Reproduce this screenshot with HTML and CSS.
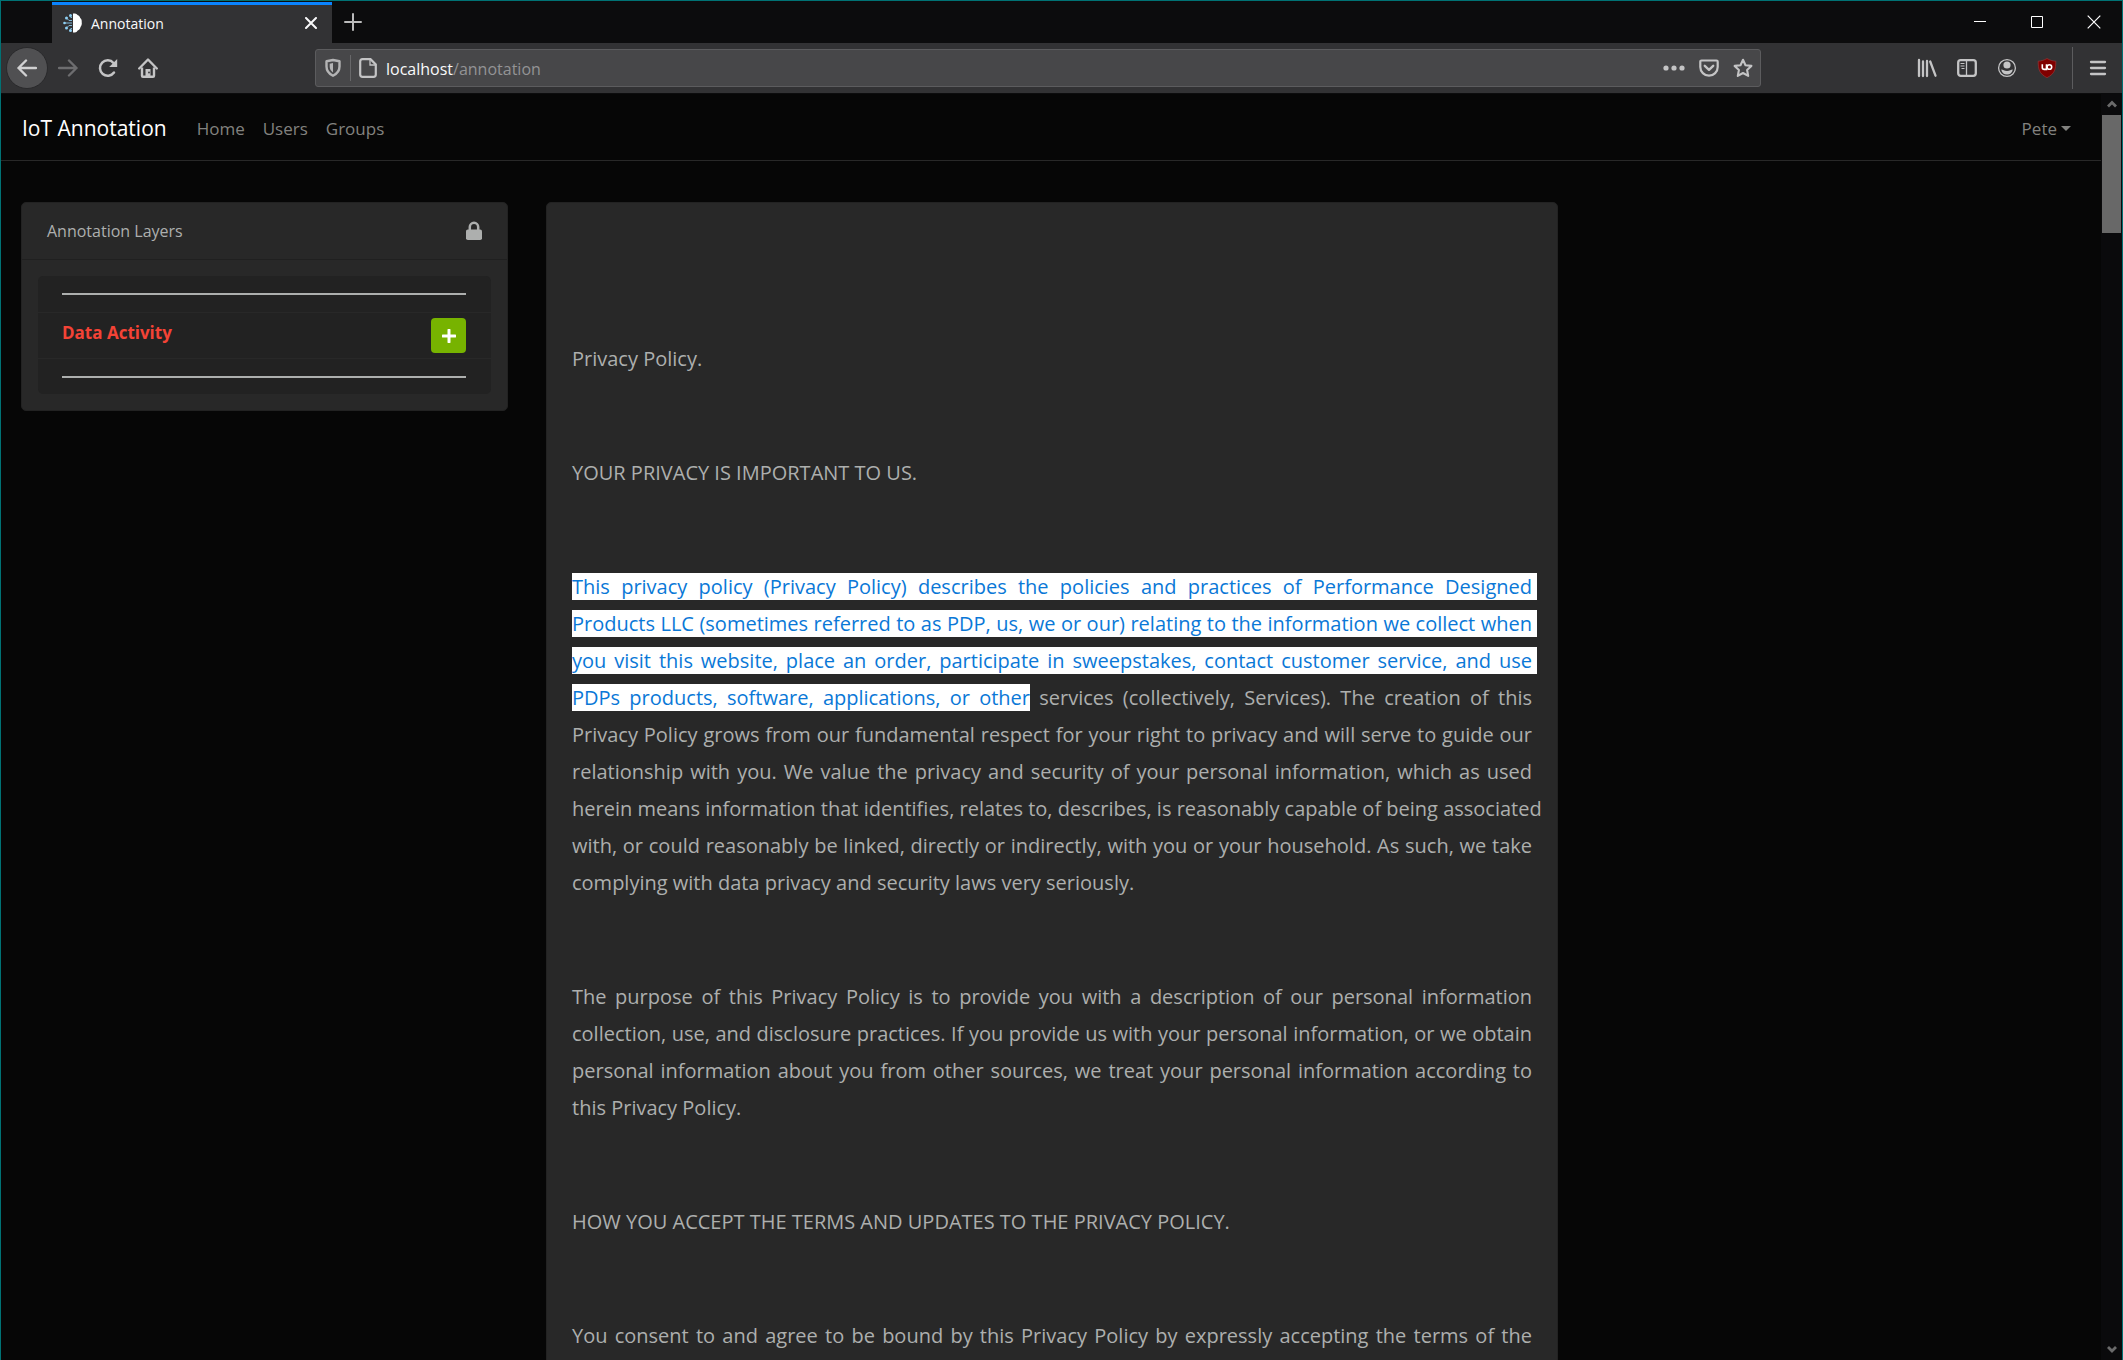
FILE: index.html
```html
<!DOCTYPE html>
<html lang="en">
<head>
<meta charset="utf-8">
<title>Annotation</title>
<link rel="stylesheet" href="styles.css">
</head>
<body>
<div class="window">
  <header class="titlebar">
    <div class="tab">
      <svg class="favicon" viewBox="0 0 20 20" width="20" height="20" aria-hidden="true">
        <path d="M10 .5h2c1 0 2 .8 2.500 1.500 1.500.4 2.500 1.700 2.700 3 1.200 1 1.800 2.500 1.500 4 .4 2-.1 3.800-1.200 5-.3 1.700-1.300 3-2.800 3.500-.6 1.200-1.700 2-2.700 2h-2z" fill="#fff"/>
        <g stroke="#7fb6d6" fill="none"><path d="M9 4.500H7.500M9 7.500H6L4.500 6M9 10H2M9 12.500H6L4.500 14M9 15.500H7.500"/></g>
        <g fill="#8fd0f4"><circle cx="7.500" cy="2.500" r="1.500"/><circle cx="3.500" cy="5" r="1.500"/><circle cx="1.500" cy="10" r="1.300"/><circle cx="3.500" cy="15" r="1.500"/><circle cx="7.500" cy="17.500" r="1.500"/></g>
      </svg>
      <span class="tab-title">Annotation</span>
      <button class="icon-button tab-close" aria-label="Close tab"><svg viewBox="0 0 12 12" width="12" height="12"><path d="M1 1l10 10M11 1L1 11" stroke="#f9f9fa" stroke-width="2" stroke-linecap="round"/></svg></button>
    </div>
    <button class="icon-button new-tab" aria-label="New tab"><svg viewBox="0 0 18 18" width="18" height="18"><path d="M9 1v16M1 9h16" stroke="#bbb" stroke-width="2" stroke-linecap="round"/></svg></button>
    <div class="window-controls">
      <button class="icon-button" aria-label="Minimize"><svg viewBox="0 0 14 14" width="14" height="14"><path d="M1 6.500h12" stroke="#fff"/></svg></button>
      <button class="icon-button" aria-label="Maximize"><svg viewBox="0 0 14 14" width="14" height="14"><path d="M1.500 1.500h11v11h-11z" stroke="#fff" fill="none"/></svg></button>
      <button class="icon-button" aria-label="Close"><svg viewBox="0 0 14 14" width="14" height="14"><path d="M.7.700l12.600 12.600M13.300.700L.7 13.300" stroke="#fff" stroke-width="1.200"/></svg></button>
    </div>
  </header>

  <div class="toolbar">
    <div class="nav-buttons">
      <button class="icon-button back" aria-label="Back"><svg viewBox="0 0 20 20" width="20" height="20"><path d="M19 10H1.500M9 2.500L1.500 10 9 17.500" stroke="#d0d0d1" stroke-width="2.400" fill="none" stroke-linecap="round" stroke-linejoin="round"/></svg></button>
      <button class="icon-button" aria-label="Forward" disabled><svg viewBox="0 0 20 20" width="20" height="20"><path d="M1 10h17.500M11 2.500l7.500 7.500-7.500 7.500" stroke="#6d6d6f" stroke-width="2.400" fill="none" stroke-linecap="round" stroke-linejoin="round"/></svg></button>
      <button class="icon-button" aria-label="Reload"><svg viewBox="0 0 20 20" width="20" height="20"><path d="M16 14.500A7.700 7.700 0 1 1 15.500 5" stroke="#c4c4c5" stroke-width="2.500" fill="none" stroke-linecap="round"/><path d="M19.200 1v8h-8z" fill="#c4c4c5"/></svg></button>
      <button class="icon-button" aria-label="Home"><svg viewBox="0 0 20 20" width="20" height="20"><path d="M1.200 10.500L10 1.500l8.800 9" stroke="#c4c4c5" stroke-width="2.400" fill="none" stroke-linecap="round" stroke-linejoin="round"/><path d="M4 9.500v8.200q0 1 1 1h10q1 0 1-1V9.500" stroke="#c4c4c5" stroke-width="2.400" fill="none"/><path d="M7.500 18.500v-7.500h5v7.500z" fill="#c4c4c5"/><circle cx="11" cy="14.500" r=".9" fill="#323234"/></svg></button>
    </div>
    <div class="urlbar">
      <svg class="shield" viewBox="0 0 18 20" width="18" height="20" aria-hidden="true"><path d="M9 2l6.500 1.300v5.200c0 4.200-2.500 7.300-6.500 9.300-4-2-6.500-5.100-6.500-9.300V3.300z" stroke="#b4b4b5" stroke-width="2.400" fill="none" stroke-linejoin="round"/><path d="M9 5v9.500C7 13 5.700 11.200 5.700 8.500V5.700z" fill="#b4b4b5"/></svg>
      <span class="url-divider"></span>
      <svg class="page-icon" viewBox="0 0 18 20" width="18" height="20" aria-hidden="true"><path d="M3.500 1.200h8l5.300 5.300v10q0 2.300-2.300 2.300h-11q-2.300 0-2.300-2.300v-13q0-2.300 2.300-2.300z" stroke="#c4c4c5" stroke-width="2.200" fill="none"/><path d="M11 1v6h6" stroke="#c4c4c5" stroke-width="1.300" fill="none"/></svg>
      <a class="url" href="#"><span class="host">localhost</span>/annotation</a>
      <div class="url-actions">
        <button class="icon-button" aria-label="Page actions"><svg viewBox="0 0 22 20" width="22" height="20"><g fill="#c4c4c5"><circle cx="3" cy="10" r="2.600"/><circle cx="11" cy="10" r="2.600"/><circle cx="19" cy="10" r="2.600"/></g></svg></button>
        <button class="icon-button" aria-label="Save to Pocket"><svg viewBox="0 0 20 20" width="20" height="20"><path d="M2.500 2.500h15q1.200 0 1.200 1.200V9a8.700 8.700 0 0 1-17.400 0V3.700q0-1.200 1.200-1.200z" stroke="#c4c4c5" stroke-width="2.200" fill="none"/><path d="M5.800 7.800L10 11.800l4.200-4" stroke="#c4c4c5" stroke-width="2.400" fill="none" stroke-linecap="round" stroke-linejoin="round"/></svg></button>
        <button class="icon-button" aria-label="Bookmark"><svg viewBox="0 0 20 20" width="20" height="20"><path d="M10 1.800l2.500 5.400 5.900.7-4.300 4.100 1.100 5.900-5.200-2.900-5.200 2.900 1.100-5.900L1.600 7.900l5.900-.7z" stroke="#c4c4c5" stroke-width="2.100" fill="none" stroke-linejoin="round"/></svg></button>
      </div>
    </div>
    <div class="tools">
      <button class="icon-button" aria-label="Library"><svg viewBox="0 0 20 20" width="20" height="20"><path d="M2 2v16M6 3.500v14.500M10 3v15" stroke="#c4c4c5" stroke-width="2.300" stroke-linecap="round"/><path d="M13.200 3.500l5.300 14.200" stroke="#c4c4c5" stroke-width="2.300" stroke-linecap="round"/></svg></button>
      <button class="icon-button" aria-label="Sidebars"><svg viewBox="0 0 20 20" width="20" height="20"><rect x="1.200" y="2.200" width="17.600" height="15.600" rx="2.500" stroke="#c4c4c5" stroke-width="2.300" fill="none"/><path d="M9.500 3v14" stroke="#c4c4c5" stroke-width="1.300"/><path d="M3.500 5.500h4M3.500 8h4M4.500 10.500h3" stroke="#c4c4c5" stroke-width="1.200"/></svg></button>
      <button class="icon-button" aria-label="Account"><svg viewBox="0 0 20 20" width="20" height="20"><circle cx="10" cy="10" r="8.400" stroke="#c4c4c5" stroke-width="1.300" fill="none"/><circle cx="10" cy="7" r="3.600" fill="#c4c4c5"/><path d="M4.200 11.500c2 .2 3 1.500 5.800 1.500s3.800-1.300 5.800-1.500c-.4 3-2.700 5-5.800 5s-5.400-2-5.800-5z" fill="#c4c4c5"/></svg></button>
      <button class="icon-button" aria-label="uBlock Origin"><svg viewBox="0 0 20 20" width="20" height="20"><path d="M10 .5c3 1.700 5.500 2.500 8.800 2.700 0 8-1 12.500-8.800 16.500C2.200 15.700 1.200 11.200 1.200 3.200 4.500 3 7 2.200 10 .5z" fill="#800000" stroke="#9c3a3a" stroke-width=".6"/><path d="M5.300 6.300v3.200q0 1.900 1.900 1.900h2.300V6.300" stroke="#fff" stroke-width="1.600" fill="none"/><circle cx="12.400" cy="9" r="2.300" stroke="#fff" stroke-width="1.600" fill="none"/></svg></button>
      <span class="tool-divider"></span>
      <button class="icon-button" aria-label="Menu"><svg viewBox="0 0 20 20" width="20" height="20"><path d="M3 4h14M3 10h14M3 16h14" stroke="#c4c4c5" stroke-width="2.300" stroke-linecap="round"/></svg></button>
    </div>
  </div>

  <div class="viewport">
    <div class="page">
      <nav class="navbar">
        <a class="brand" href="#">IoT Annotation</a>
        <a class="nav-link" href="#">Home</a>
        <a class="nav-link" href="#">Users</a>
        <a class="nav-link" href="#">Groups</a>
        <button class="user-menu">Pete<span class="caret"></span></button>
      </nav>
      <main class="content">
        <aside class="card layers">
          <div class="card-header">
            <span>Annotation Layers</span>
            <svg viewBox="0 0 16 20" width="16" height="20" aria-label="Locked" role="img"><path d="M3.800 9.500V6a4.200 4.200 0 0 1 8.400 0v3.500" stroke="#adafae" stroke-width="2.500" fill="none"/><rect x="0" y="8.500" width="16" height="10.500" rx="1.800" fill="#adafae"/></svg>
          </div>
          <ul class="layer-list">
            <li><hr></li>
            <li class="layer"><span class="layer-name">Data Activity</span><button class="add" aria-label="Add Data Activity"><svg viewBox="0 0 14 14" width="14" height="14"><path d="M7 1v12M1 7h12" stroke="#fff" stroke-width="3" stroke-linecap="round"/></svg></button></li>
            <li><hr></li>
          </ul>
        </aside>
        <article class="card document">
          <p>Privacy Policy.</p>
          <p>YOUR PRIVACY IS IMPORTANT TO US.</p>
          <p><mark class="full-line">This privacy policy (Privacy Policy) describes the policies and practices of Performance Designed</mark> <mark class="full-line">Products LLC (sometimes referred to as PDP, us, we or our) relating to the information we collect when</mark> <mark class="full-line">you visit this website, place an order, participate in sweepstakes, contact customer service, and use</mark> <mark>PDPs products, software, applications, or other</mark> services (collectively, Services). The creation of this Privacy Policy grows from our fundamental respect for your right to privacy and will serve to guide our relationship with you. We value the privacy and security of your personal information, which as used <span class="unbroken">herein means information that identifies, relates to, describes, is reasonably capable of being associated</span> <span class="unbroken">with, or could reasonably be linked, directly or indirectly, with you or your household. As such, we take</span> complying with data privacy and security laws very seriously.</p>
          <p>The purpose of this Privacy Policy is to provide you with a description of our personal information collection, use, and disclosure practices. If you provide us with your personal information, or we obtain personal information about you from other sources, we treat your personal information according to this Privacy Policy.</p>
          <p>HOW YOU ACCEPT THE TERMS AND UPDATES TO THE PRIVACY POLICY.</p>
          <p class="cut">You consent to and agree to be bound by this Privacy Policy by expressly accepting the terms of the</p>
        </article>
      </main>
    </div>
    <div class="scrollbar" aria-hidden="true">
      <svg viewBox="0 0 21 22" width="21" height="22"><path d="M7 13.500l4-4 4 4" stroke="#6a6a6b" stroke-width="2.800" fill="none"/></svg>
      <span class="thumb"></span>
      <svg class="arrow-down" viewBox="0 0 21 22" width="21" height="22"><path d="M7 9l4 4 4-4" stroke="#6a6a6b" stroke-width="2.800" fill="none"/></svg>
    </div>
  </div>
</div>
</body>
</html>
```
FILE: styles.css
```css
* { box-sizing: border-box; }

body {
  margin: 0;
  background: #060606;
  color: #adafae;
  font-family: "Open Sans", "Noto Sans", sans-serif;
  font-size: 16px;
}

a { color: inherit; text-decoration: none; }

button { font: inherit; color: inherit; }

svg { display: block; flex: none; }

.window {
  display: flex;
  flex-direction: column;
  height: 100vh;
  overflow: hidden;
  border: 1px solid #007274;
  border-bottom: 0;
}

.icon-button {
  display: flex;
  align-items: center;
  justify-content: center;
  padding: 0;
  border: 0;
  background: none;
}

/* Title bar */
.titlebar {
  display: flex;
  flex: none;
  height: 42px;
  padding-left: 51px;
  background: #0c0c0d;
}

.tab {
  display: flex;
  align-items: center;
  width: 280px;
  margin-top: 1px;
  padding: 0 14px 2px 11px;
  border-top: 3px solid #0a84ff;
  background: #323234;
  color: #f9f9fa;
  font-size: 14px;
}

.tab-title { flex: 1; padding-left: 8px; }

.tab-close { width: 14px; height: 20px; }

.new-tab { width: 42px; }

.window-controls { display: flex; margin-left: auto; }

.window-controls .icon-button { width: 57px; }

/* Toolbar */
.toolbar {
  display: flex;
  flex: none;
  align-items: center;
  height: 50px;
  padding: 0 14px 0 5px;
  background: #323234;
}

.nav-buttons { display: flex; align-items: center; width: 309px; }

.nav-buttons .icon-button { width: 40px; height: 40px; }

.nav-buttons .back {
  width: 42px;
  height: 42px;
  border: 1px solid #29292b;
  border-radius: 50%;
  background: #505052;
}

.urlbar {
  display: flex;
  align-items: center;
  width: 1446px;
  height: 38px;
  padding: 0 7px 0 8px;
  border: 1px solid #5c5c5e;
  border-radius: 3px;
  background: #474749;
}

.url-divider { width: 1px; height: 26px; margin: 0 8px; background: #68686a; }

.url { padding: 2px 0 0 9px; color: #939395; }

.host { color: #f9f9fa; }

.url-actions { display: flex; gap: 14px; margin-left: auto; }

.tools { display: flex; align-items: center; gap: 20px; margin-left: auto; }

.tool-divider { width: 1px; height: 42px; margin-left: -5px; margin-right: -5px; background: #5c5c5e; }

/* Page area */
.viewport { display: flex; flex: 1; min-height: 0; }

.page { flex: 1; min-width: 0; overflow: hidden; }

.navbar {
  display: flex;
  align-items: center;
  gap: 18px;
  height: 68px;
  padding: 2px 30px 0 21px;
  border-top: 1px solid #0c0c0d;
  border-bottom: 1px solid #282828;
  color: #82827f;
  font-size: 17px;
}

.brand { margin-right: 12px; color: #fff; font-size: 21px; }

.user-menu {
  display: flex;
  align-items: center;
  gap: 4px;
  margin-left: auto;
  padding: 0;
  border: 0;
  background: none;
}

.caret { border: 5px solid transparent; border-top-color: currentColor; border-bottom: 0; }

.content {
  display: grid;
  grid-template-columns: 487fr 1012fr 505fr;
  align-items: start;
  gap: 38px;
  padding: 41px 0 0 20px;
}

.card { min-width: 0; border: 1px solid #222; border-radius: 5px; background: #282828; }

.card-header {
  display: flex;
  align-items: center;
  justify-content: space-between;
  height: 57px;
  padding: 0 25px;
  border-bottom: 1px solid #202020;
}

.layer-list { margin: 16px; padding: 0; border-radius: 5px; background: #222; list-style: none; }

.layer-list li {
  display: flex;
  align-items: center;
  height: 36px;
  padding: 0 25px 0 24px;
}

.layer-list li + li { border-top: 1px solid #282828; }

.layer-list .layer { justify-content: space-between; height: 46px; }

.layer-list hr { flex: 1; height: 2px; margin: 0; border: 0; background: #adafae; }

.layer-name { padding-bottom: 6px; color: #f44336; font-size: 17px; font-weight: 700; }

.add {
  display: flex;
  align-items: center;
  justify-content: center;
  width: 35px;
  height: 35px;
  padding: 0;
  border: 0;
  border-radius: 4px;
  background: #77b300;
}

.document {
  padding: 137px 25px 25px;
  font-size: 20px;
  line-height: 37px;
  text-align: justify;
}

.document p { margin: 0 0 77px; }

.document .cut { text-align-last: justify; }

.unbroken { white-space: nowrap; }

mark { background: #fff; color: #0a78d7; }

/* The selection runs past the wrapped space at each line end. */
.full-line { box-shadow: 5px 0 #fff; }

/* Scrollbar */
.scrollbar {
  display: flex;
  flex-direction: column;
  width: 21px;
  background: #0a0a0c;
}

.thumb { height: 118px; margin: 0 1px; background: #686868; }

.arrow-down { margin-top: auto; }
```
